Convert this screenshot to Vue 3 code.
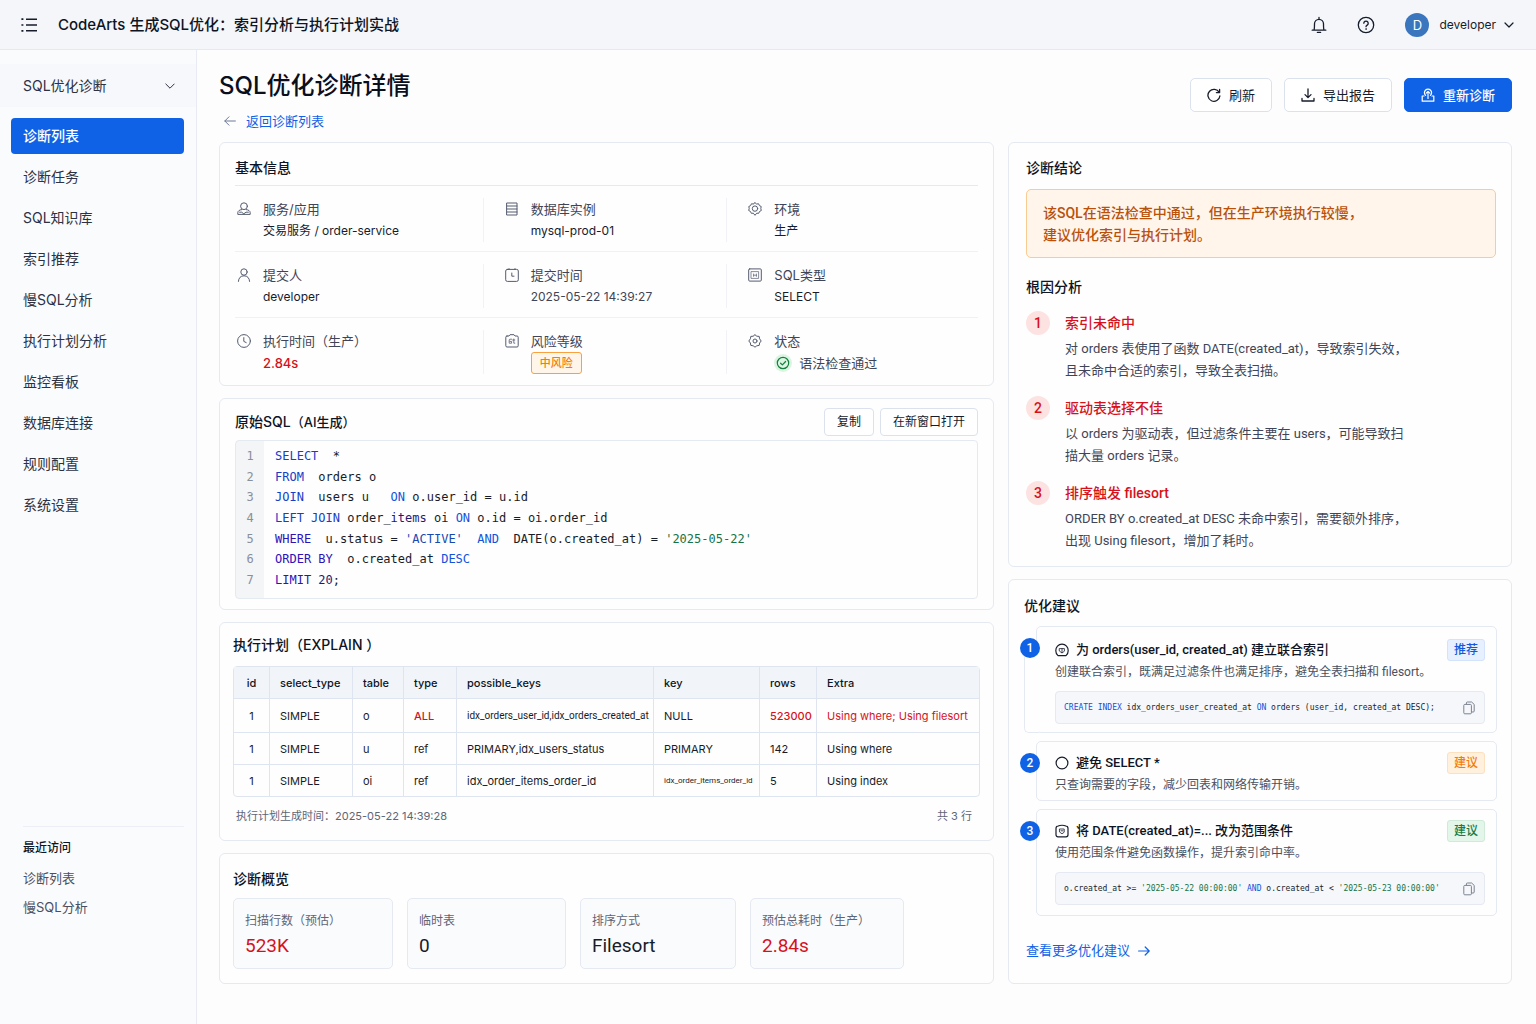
<script setup>
import { ref } from 'vue'

const navItems = ['诊断列表', '诊断任务', 'SQL知识库', '索引推荐', '慢SQL分析', '执行计划分析', '监控看板', '数据库连接', '规则配置', '系统设置']
const activeNav = ref('诊断列表')
const recents = ['诊断列表', '慢SQL分析']

const infoRows = [
  [
    { icon: 'service', label: '服务/应用', value: '交易服务 / order-service' },
    { icon: 'database', label: '数据库实例', value: 'mysql-prod-01' },
    { icon: 'gear', label: '环境', value: '生产' },
  ],
  [
    { icon: 'user', label: '提交人', value: 'developer' },
    { icon: 'calendar', label: '提交时间', value: '2025-05-22 14:39:27', tone: 'soft' },
    { icon: 'chip', label: 'SQL类型', value: 'SELECT' },
  ],
  [
    { icon: 'clock', label: '执行时间（生产）', value: '2.84s', tone: 'danger' },
    { icon: 'risk', label: '风险等级', value: '中风险', tone: 'tag' },
    { icon: 'cog', label: '状态', value: '语法检查通过', tone: 'pass' },
  ],
]

// Each line is a list of [text, colour class] tokens.
const sqlLines = [
  [['SELECT', 'kw'], ['  *', '']],
  [['FROM', 'kw'], ['  orders o', '']],
  [['JOIN', 'kw'], ['  users u   ', ''], ['ON', 'kw2'], [' o.user_id = u.id', '']],
  [['LEFT JOIN', 'kw'], [' order_', ''], ['items', 'navy'], [' oi ', ''], ['ON', 'kw2'], [' o.id = oi.order_id', '']],
  [['WHERE', 'kw3'], ['  u.status = ', ''], ["'ACTIVE'", 'lit'], ['  ', ''], ['AND', 'kw2'], ['  DATE(o.created_at) = ', ''], ["'2025-05-22'", 'str']],
  [['ORDER BY', 'kw3'], ['  o.created_at ', ''], ['DESC', 'kw2']],
  [['LIMIT', 'kw3'], [' ', ''], ['20', 'navy'], [';', '']],
]

const planColumns = ['id', 'select_type', 'table', 'type', 'possible_keys', 'key', 'rows', 'Extra']
const planRows = [
  ['1', 'SIMPLE', 'o', 'ALL', 'idx_orders_user_id,idx_orders_created_at', 'NULL', '523000', 'Using where; Using filesort'],
  ['1', 'SIMPLE', 'u', 'ref', 'PRIMARY,idx_users_status', 'PRIMARY', '142', 'Using where'],
  ['1', 'SIMPLE', 'oi', 'ref', 'idx_order_items_order_id', 'idx_order_items_order_id', '5', 'Using index'],
]
function cellClass(row, col) {
  return {
    danger: row === 0 && (col === 3 || col >= 6),
    strong: row === 0 && (col === 3 || col === 6),
    small: row === 0 && col === 4,
    tiny: row === 2 && col === 5,
  }
}

const stats = [
  { label: '扫描行数（预估）', value: '523K', danger: true },
  { label: '临时表', value: '0' },
  { label: '排序方式', value: 'Filesort' },
  { label: '预估总耗时（生产）', value: '2.84s', danger: true },
]

const causes = [
  { title: '索引未命中', lines: ['对 orders 表使用了函数 DATE(created_at)，导致索引失效，', '且未命中合适的索引，导致全表扫描。'] },
  { title: '驱动表选择不佳', lines: ['以 orders 为驱动表，但过滤条件主要在 users，可能导致扫', '描大量 orders 记录。'] },
  { title: '排序触发 filesort', lines: ['ORDER BY o.created_at DESC 未命中索引，需要额外排序，', '出现 Using filesort，增加了耗时。'] },
]

const advices = [
  {
    icon: 'shield', title: '为 orders(user_id, created_at) 建立联合索引', badge: '推荐', tone: 'blue',
    desc: '创建联合索引，既满足过滤条件也满足排序，避免全表扫描和 filesort。',
    code: [['CREATE INDEX', 'kw2'], [' idx_orders_user_created_at ', ''], ['ON', 'kw2'], [' orders (user_id, created_at DESC);', '']],
  },
  {
    icon: 'ring', title: '避免 SELECT *', badge: '建议', tone: 'orange',
    desc: '只查询需要的字段，减少回表和网络传输开销。',
  },
  {
    icon: 'case', title: '将 DATE(created_at)=... 改为范围条件', badge: '建议', tone: 'green',
    desc: '使用范围条件避免函数操作，提升索引命中率。',
    code: [['o.created_at >= ', ''], ["'2025-05-22 00:00:00'", 'str'], [' ', ''], ['AND', 'kw2'], [' o.created_at < ', ''], ["'2025-05-23 00:00:00'", 'str']],
  },
]
</script>

<template>
  <div class="app">
    <header class="topbar">
      <button class="icon-btn" aria-label="菜单">
        <svg width="18" height="18" viewBox="0 0 18 18" fill="none" stroke="currentColor" stroke-width="1.5">
          <path d="M6 3.2h11M6 9h11M6 14.8h11" />
          <path d="M1.4 3.2h2M1.4 9h2M1.4 14.8h2" stroke-width="1.7" />
        </svg>
      </button>
      <span class="brand">CodeArts 生成SQL优化：索引分析与执行计划实战</span>
      <button class="icon-btn bell" aria-label="通知">
        <svg width="18" height="18" viewBox="0 0 18 18" fill="none" stroke="currentColor" stroke-width="1.3" stroke-linecap="round" stroke-linejoin="round">
          <path d="M2.2 14.2h13.6M4 14c.5-1 .5-2.200.5-6.200a4.500 4.500 0 0 1 9 0c0 4 0 5.200.5 6.200M9 3V1.400M7.400 16.400h3.200" />
        </svg>
      </button>
      <button class="icon-btn help" aria-label="帮助">
        <svg width="18" height="18" viewBox="0 0 18 18" fill="none" stroke="currentColor" stroke-width="1.3" stroke-linecap="round">
          <circle cx="9" cy="9" r="7.7" />
          <path d="M6.8 7.200a2.200 2.200 0 1 1 3.400 1.900c-.8.5-1.200.8-1.200 1.600" />
          <circle cx="9" cy="13" r=".5" fill="currentColor" stroke-width=".5" />
        </svg>
      </button>
      <button class="account">
        <span class="avatar">D</span>
        <span>developer</span>
        <svg width="10" height="10" viewBox="0 0 10 10" fill="none" stroke="currentColor" stroke-width="1.2" stroke-linecap="round" stroke-linejoin="round"><path d="M1 3 5 7l4-4" /></svg>
      </button>
    </header>

    <div class="body">
      <aside class="sidebar">
        <button class="group">
          <span>SQL优化诊断</span>
          <svg width="10" height="10" viewBox="0 0 10 10" fill="none" stroke="currentColor" stroke-linecap="round" stroke-linejoin="round"><path d="M.8 3 5 7.2 9.2 3" /></svg>
        </button>
        <nav class="nav">
          <a v-for="item in navItems" :key="item" href="#" :class="{ active: item === activeNav }" @click.prevent="activeNav = item">{{ item }}</a>
        </nav>
        <div class="recent">
          <h2>最近访问</h2>
          <a v-for="item in recents" :key="item" href="#">{{ item }}</a>
        </div>
      </aside>

      <main class="main">
        <div class="page-head">
          <div>
            <h1>SQL优化诊断详情</h1>
            <a class="back" href="#">
              <svg width="12" height="12" viewBox="0 0 12 12" fill="none" stroke="currentColor" stroke-linecap="round" stroke-linejoin="round"><path d="M11.4 6H.8M5 1.8.8 6 5 10.2" /></svg>
              返回诊断列表
            </a>
          </div>
          <div class="actions">
            <button class="btn">
              <svg width="14" height="14" viewBox="0 0 14 14" fill="none" stroke="currentColor" stroke-width="1.3" stroke-linecap="round" stroke-linejoin="round"><path d="M12.2 4.400A6 6 0 1 0 12.900 8M12.600 1.400v3.200H9.400" /></svg>
              刷新
            </button>
            <button class="btn">
              <svg width="14" height="14" viewBox="0 0 14 14" fill="none" stroke="currentColor" stroke-width="1.3" stroke-linecap="round" stroke-linejoin="round"><path d="M7 1v8.400M4 6.600l3 3 3-3M1 10.400V13h12v-2.600" /></svg>
              导出报告
            </button>
            <button class="btn primary">
              <svg width="14" height="14" viewBox="0 0 14 14" fill="none" stroke="currentColor" stroke-width="1.2" stroke-linecap="round" stroke-linejoin="round"><path d="M3 8H1.200v5.200h11.600V8H11M4.600 7.400a3.600 3.600 0 1 1 4.800 0M7 10.400V3.600M5.200 5.200 7 3.400l1.800 1.800" /></svg>
              重新诊断
            </button>
          </div>
        </div>

        <div class="columns">
          <div class="col">
            <section class="card info">
              <h2>基本信息</h2>
              <div v-for="(row, r) in infoRows" :key="r" class="info-row">
                <div v-for="cell in row" :key="cell.label" class="info-cell">
                  <svg class="glyph" width="14" height="14" viewBox="0 0 14 14" fill="none" stroke="currentColor" stroke-linecap="round" stroke-linejoin="round">
                    <template v-if="cell.icon === 'service'">
                      <circle cx="7" cy="4.200" r="3.400" />
                      <path d="M4.800 7.600C2.400 7.800.8 9 .8 10.800v1.600h12.400v-1.600c0-1.800-1.600-3-4-3.200M2.600 10.200h2l2.200 1.600 2.200-1.600h2.400" />
                    </template>
                    <template v-else-if="cell.icon === 'database'">
                      <path d="M2 1h10v12H2zM2 4h10M2 7h10M2 10h10" />
                    </template>
                    <template v-else-if="cell.icon === 'gear'">
                      <path d="M7 .7 8.600 2l2-.2.8 1.800 1.800.9-.4 2 .5 2-1.800 1-.8 1.800-2-.1L7 13.300l-1.700-2.100-2 .1-.8-1.800-1.800-1 .5-2-.4-2 1.800-.9.8-1.800 2 .2z" />
                      <circle cx="7" cy="6.600" r="2.700" />
                    </template>
                    <template v-else-if="cell.icon === 'user'">
                      <circle cx="7" cy="4" r="3.200" />
                      <path d="M1.400 13.400c.2-3.400 2.200-5.600 5.600-5.600s5.400 2.200 5.600 5.600" />
                    </template>
                    <template v-else-if="cell.icon === 'calendar'">
                      <rect x=".7" y="1.400" width="12.600" height="12" rx="1.600" />
                      <path d="M4 .6v1M10 .6v1M6.800 5v3.200H9" />
                    </template>
                    <template v-else-if="cell.icon === 'chip'">
                      <rect x=".7" y=".9" width="12.600" height="12.200" rx="1" />
                      <path d="M3.400 3.600h7.200v6.800H3.400zM5.600 6v2.400M8.400 6v2.400M5.600 7.200h2.800" stroke-width=".7" />
                    </template>
                    <template v-else-if="cell.icon === 'clock'">
                      <circle cx="7" cy="7" r="6.400" />
                      <path d="M6.800 3.600v3.800l2.400 1.200" />
                    </template>
                    <template v-else-if="cell.icon === 'risk'">
                      <path d="M2 2h2l1-1.300h4L10 2h2a1.200 1.200 0 0 1 1.200 1.200v8.600A1.200 1.200 0 0 1 12 13H2a1.200 1.200 0 0 1-1.200-1.200V3.200A1.200 1.200 0 0 1 2 2z" />
                      <path d="M6.600 5.200H5a.8.8 0 0 0-.8.8v3.200h2.400V7.400H5M7.600 6h2.200M8.800 5v4.200h1" stroke-width=".8" />
                    </template>
                    <template v-else>
                      <path d="m7 .8 1.800 1.400 2.400.2.400 2.400L13.200 7l-1.600 2-.4 2.400-2.400.4L7 13.200l-1.800-1.400-2.400-.4L2.400 9 .8 7l1.600-2.200.4-2.400 2.400-.2z" />
                      <circle cx="7" cy="7" r="2" />
                    </template>
                  </svg>
                  <div class="info-text">
                    <span class="label">{{ cell.label }}</span>
                    <span v-if="cell.tone === 'tag'" class="risk-tag">{{ cell.value }}</span>
                    <span v-else-if="cell.tone === 'pass'" class="value pass">
                      <svg width="18" height="18" viewBox="0 0 18 18" fill="none" stroke="#15803d" stroke-width="1.200" stroke-linecap="round" stroke-linejoin="round">
                        <circle cx="9" cy="9" r="9" fill="#dcf5e3" stroke="none" />
                        <circle cx="9" cy="9" r="5.700" />
                        <path d="m6.600 9.200 1.800 1.700 3.200-3.400" />
                      </svg>
                      {{ cell.value }}
                    </span>
                    <span v-else class="value" :class="cell.tone">{{ cell.value }}</span>
                  </div>
                </div>
              </div>
            </section>

            <section class="card sql">
              <div class="sql-head">
                <h2>原始SQL<small>（AI生成）</small></h2>
                <button class="btn-sm">复制</button>
                <button class="btn-sm">在新窗口打开</button>
              </div>
              <ol class="code">
                <li v-for="(line, n) in sqlLines" :key="n">
                  <span class="num">{{ n + 1 }}</span>
                  <code><span v-for="(t, i) in line" :key="i" :class="t[1]">{{ t[0] }}</span></code>
                </li>
              </ol>
            </section>

            <section class="card plan">
              <h2>执行计划（EXPLAIN ）</h2>
              <table>
                <colgroup>
                  <col class="c-id"><col class="c-select"><col class="c-table"><col class="c-type"><col class="c-possible"><col class="c-key"><col class="c-rows"><col>
                </colgroup>
                <thead>
                  <tr><th v-for="c in planColumns" :key="c" scope="col">{{ c }}</th></tr>
                </thead>
                <tbody>
                  <tr v-for="(row, r) in planRows" :key="r">
                    <td v-for="(v, c) in row" :key="c" :class="cellClass(r, c)">{{ v }}</td>
                  </tr>
                </tbody>
              </table>
              <div class="plan-foot">
                <span>执行计划生成时间：2025-05-22 14:39:28</span>
                <span>共 3 行</span>
              </div>
            </section>

            <section class="card overview">
              <h2>诊断概览</h2>
              <div class="stats">
                <div v-for="s in stats" :key="s.label" class="stat">
                  <span class="stat-label">{{ s.label }}</span>
                  <strong :class="{ danger: s.danger }">{{ s.value }}</strong>
                </div>
              </div>
            </section>
          </div>

          <div class="col">
            <section class="card verdict">
              <h2>诊断结论</h2>
              <p class="alert">该SQL在语法检查中通过，但在生产环境执行较慢，<br>建议优化索引与执行计划。</p>
              <h2>根因分析</h2>
              <ol class="causes">
                <li v-for="(c, n) in causes" :key="n">
                  <span class="cause-num">{{ n + 1 }}</span>
                  <div>
                    <h3>{{ c.title }}</h3>
                    <p><template v-for="(l, i) in c.lines" :key="i"><br v-if="i">{{ l }}</template></p>
                  </div>
                </li>
              </ol>
            </section>

            <section class="card advice">
              <h2>优化建议</h2>
              <ol class="advice-list">
                <li v-for="(a, n) in advices" :key="n">
                  <span class="step">{{ n + 1 }}</span>
                  <div class="advice-title">
                    <svg width="14" height="14" viewBox="0 0 14 14" fill="none" stroke="currentColor" stroke-width="1.200" stroke-linecap="round" stroke-linejoin="round">
                      <template v-if="a.icon === 'shield'">
                        <path d="M3 12.600A6.200 6.200 0 0 1 .8 7.800 6.200 6.200 0 0 1 7 1.200a6.200 6.200 0 0 1 6.200 6.600A6.200 6.200 0 0 1 11 12.600z" />
                        <path d="M4.600 5.600h4.800v2.600L7 10 4.600 8.200zM7 5.600v4" stroke-width=".8" />
                      </template>
                      <circle v-else-if="a.icon === 'ring'" cx="7" cy="7" r="5.900" />
                      <template v-else>
                        <path d="M3 12.800a2 2 0 0 1-2-2V4.400A2.400 2.400 0 0 1 3.200 2C5 1 9 1 10.800 2A2.400 2.400 0 0 1 13 4.400v6.400a2 2 0 0 1-2 2z" />
                        <path d="M4.800 5h4.400v3.200L7 9.800 4.800 8.200zM6 6.800h2" stroke-width=".8" />
                      </template>
                    </svg>
                    <h3>{{ a.title }}</h3>
                    <span class="badge" :class="a.tone">{{ a.badge }}</span>
                  </div>
                  <p>{{ a.desc }}</p>
                  <div v-if="a.code" class="snippet">
                    <code><span v-for="(t, i) in a.code" :key="i" :class="t[1]">{{ t[0] }}</span></code>
                    <button class="copy" aria-label="复制代码">
                      <svg width="12" height="14" viewBox="0 0 12 14" fill="none" stroke="currentColor" stroke-linejoin="round">
                        <rect x=".8" y="3.400" width="7.600" height="9.400" rx="1" />
                        <path d="M3.400 3.200V2a1 1 0 0 1 1-1h4.200l2.600 2.400V10a1 1 0 0 1-1 1H8.600" />
                      </svg>
                    </button>
                  </div>
                </li>
              </ol>
              <a class="more" href="#">
                查看更多优化建议
                <svg width="12" height="12" viewBox="0 0 12 12" fill="none" stroke="currentColor" stroke-width="1.200" stroke-linecap="round" stroke-linejoin="round"><path d="M.6 6h10.600M7.200 2l4 4-4 4" /></svg>
              </a>
            </section>
          </div>
        </div>
      </main>
    </div>
  </div>
</template>

<style>
body {
  margin: 0;
  background: #fdfdfe;
}
</style>

<style scoped>
.app {
  --ink: #171c2b;
  --muted: #5f6577;
  --line: #e5e9f2;
  --blue: #0f62e6;
  --red: #d5121b;
  display: flex;
  flex-direction: column;
  min-height: 100vh;
  color: var(--ink);
  font-family: Inter, "Noto Sans CJK SC", sans-serif;
  font-size: 13px;
  line-height: 22px;
}
h1, h2, h3, p, ol {
  margin: 0;
  padding: 0;
}
ol {
  list-style: none;
}
h2 {
  color: #0d1424;
  font-size: 14px;
  font-weight: 500;
  line-height: 24px;
}
h3 {
  font-weight: 500;
}
a {
  color: var(--blue);
  text-decoration: none;
}
button {
  padding: 0;
  border: 0;
  background: none;
  color: inherit;
  font: inherit;
  cursor: pointer;
}
svg {
  display: block;
  flex: none;
}
.danger {
  color: var(--red);
}

/* Top bar */
.topbar {
  display: flex;
  align-items: center;
  box-sizing: border-box;
  height: 50px;
  padding: 0 22px 0 20px;
  border-bottom: 1px solid #e6e9f0;
  background: #f4f6fa;
}
.brand {
  margin-left: 20px;
  color: #0d1424;
  font-size: 15px;
  font-weight: 500;
}
.bell {
  margin-left: auto;
}
.help {
  margin-left: 29px;
}
.account {
  display: flex;
  align-items: center;
  margin-left: 30px;
  font-size: 12px;
}
.account svg {
  margin-left: 8px;
}
.avatar {
  width: 24px;
  margin-right: 10px;
  border-radius: 50%;
  background: #3a76bd;
  color: #fff;
  font-size: 13px;
  line-height: 24px;
}

/* Sidebar */
.body {
  display: flex;
  flex: 1;
}
.sidebar {
  display: flex;
  flex: none;
  flex-direction: column;
  box-sizing: border-box;
  width: 197px;
  padding: 14px 0 106px;
  border-right: 1px solid #e8ebf3;
  background: #fafbfd;
}
.group {
  display: flex;
  align-items: center;
  justify-content: space-between;
  height: 43px;
  padding: 0 21px 0 23px;
  background: #f7f8fb;
  color: #2c3242;
  font-size: 14px;
}
.nav {
  display: flex;
  flex-direction: column;
  gap: 5px;
  padding: 11px 12px 0 11px;
}
.nav a {
  padding: 0 12px;
  border-radius: 4px;
  color: #2c3242;
  font-size: 14px;
  line-height: 36px;
}
.nav .active {
  background: var(--blue);
  color: #fff;
  font-weight: 500;
}
.recent {
  display: flex;
  flex-direction: column;
  gap: 7px;
  margin: auto 12px 0 23px;
  padding-top: 9px;
  border-top: 1px solid #eceff5;
}
.recent h2 {
  font-size: 12px;
}
.recent a {
  color: #4a5061;
}

/* Page */
.main {
  flex: 1;
  min-width: 0;
  padding: 20px 24px 40px 22px;
}
.page-head {
  display: flex;
  justify-content: space-between;
  margin-bottom: 10px;
}
h1 {
  color: #0a0f1c;
  font-size: 24px;
  font-weight: 500;
  line-height: 32px;
}
.back {
  display: flex;
  align-items: center;
  gap: 10px;
  margin: 8px 0 0 5px;
}
.back svg {
  color: #6b7a99;
}
.actions {
  display: flex;
  gap: 12px;
  margin-top: 8px;
}
.btn {
  display: flex;
  align-items: center;
  gap: 8px;
  box-sizing: border-box;
  height: 34px;
  padding: 0 16px;
  border: 1px solid #dbe1ed;
  border-radius: 5px;
  background: #fff;
}
.btn.primary {
  border-color: var(--blue);
  background: var(--blue);
  color: #fff;
  font-weight: 500;
}
.columns {
  display: grid;
  grid-template-columns: 775fr 504fr;
  gap: 14px;
}
.col {
  display: flex;
  flex-direction: column;
  gap: 12px;
  min-width: 0;
}
.card {
  border: 1px solid var(--line);
  border-radius: 6px;
  background: #fefefe;
}

/* Basic information */
.info {
  padding: 13px 15px 2px;
}
.info h2 {
  padding-bottom: 5px;
  border-bottom: 1px solid var(--line);
}
.info-row {
  display: grid;
  grid-template-columns: 248fr 244fr 252fr;
  padding: 12px 0 9px;
}
.info-row + .info-row {
  border-top: 1px solid #eef1f7;
}
.info-cell {
  display: flex;
  gap: 12px;
  padding-left: 2px;
}
.info-cell + .info-cell {
  padding-left: 21px;
  border-left: 1px solid #f0f2f7;
}
.glyph {
  margin-top: 4px;
  color: #555c70;
}
.info-text {
  display: flex;
  flex-direction: column;
  align-items: flex-start;
}
.label {
  color: #3f4557;
}
.value {
  font-size: 12px;
}
.value.soft {
  color: #3f4557;
}
.value.danger {
  font-size: 13px;
  font-weight: 500;
}
.value.pass {
  display: flex;
  align-items: center;
  gap: 7px;
  color: #3f4557;
  font-size: 13px;
}
.risk-tag {
  padding: 0 8px;
  border: 1px solid #f9a03f;
  border-radius: 3px;
  background: #fff5e8;
  color: #f57c0a;
  font-size: 11px;
  font-weight: 500;
  line-height: 20px;
}

/* SQL source */
.sql {
  padding: 9px 15px 10px;
}
.sql-head {
  display: flex;
  gap: 6px;
  margin-bottom: 4px;
}
.sql-head h2 {
  margin-right: auto;
  line-height: 28px;
}
.sql-head small {
  font-size: 13px;
}
.btn-sm {
  padding: 0 12px;
  border: 1px solid #dbe1ed;
  border-radius: 4px;
  background: #fff;
  font-size: 12px;
  line-height: 26px;
}
code, .num {
  font-family: "DejaVu Sans Mono", "Liberation Mono", monospace;
  white-space: pre;
}
.code {
  display: flex;
  flex-direction: column;
  justify-content: space-between;
  min-height: 144px;
  padding: 5px 0 8px;
  border: 1px solid var(--line);
  border-radius: 4px;
  background: linear-gradient(90deg, #f4f5f6 28px, #fefefe 28px);
  font-size: 12px;
  line-height: 20px;
}
.code li {
  display: flex;
  gap: 11px;
}
.num {
  width: 28px;
  color: #8a8f9c;
  text-align: center;
}
.kw {
  color: #1440c8;
}
.kw2 {
  color: #1252dc;
}
.kw3 {
  color: #2f12b8;
}
.lit {
  color: #1749b0;
}
.navy {
  color: #1d1a78;
}
.str {
  color: #157347;
}

/* Execution plan */
.plan {
  padding: 10px 13px 13px;
}
table {
  width: 100%;
  margin-top: 9px;
  border: 1px solid #dfe5f0;
  border-radius: 4px;
  border-spacing: 0;
  table-layout: fixed;
  font-size: 11px;
}
.c-id { width: 35px; }
.c-select { width: 83px; }
.c-table { width: 51px; }
.c-type { width: 53px; }
.c-possible { width: 197px; }
.c-key { width: 106px; }
.c-rows { width: 57px; }
th, td {
  height: 31px;
  padding: 0 0 0 10px;
  border-left: 1px solid #dfe5f0;
  text-align: left;
  white-space: nowrap;
}
th {
  background: #f1f4f9;
  color: #0d1424;
  font-weight: 500;
}
td {
  border-top: 1px solid #dfe5f0;
}
tbody tr:first-child td {
  height: 33px;
}
th:first-child, td:first-child {
  padding: 0;
  border-left: 0;
  text-align: center;
}
.strong {
  font-weight: 500;
}
.small, .tiny {
  font-family: Roboto, sans-serif;
  font-size: 10px;
}
.tiny {
  font-size: 8px;
}
.plan-foot {
  display: flex;
  justify-content: space-between;
  margin-top: 8px;
  padding: 0 8px 0 3px;
  color: var(--muted);
  font-size: 11px;
}

/* Overview */
.overview {
  padding: 13px 13px 14px;
}
.stats {
  display: grid;
  grid-template-columns: 160fr 159fr 156fr 154fr;
  gap: 14px;
  margin: 7px 76px 0 0;
}
.stat {
  display: flex;
  flex-direction: column;
  padding: 11px 11px 8px;
  border: 1px solid var(--line);
  border-radius: 5px;
  background: #fafbfd;
}
.stat-label {
  color: var(--muted);
  font-size: 12px;
}
.stat strong {
  font-family: Roboto, "Noto Sans CJK SC", sans-serif;
  font-size: 19px;
  font-weight: 400;
  line-height: 28px;
}

/* Verdict */
.verdict, .advice {
  font-family: Roboto, "Noto Sans CJK SC", sans-serif;
}
.verdict {
  padding: 13px 15px 14px 17px;
}
.alert {
  margin: 9px 0 17px;
  padding: 12px 16px 11px;
  border: 1px solid #fbcb94;
  border-radius: 5px;
  background: #fff5eb;
  color: #b9510a;
  font-size: 14px;
  font-weight: 500;
}
.causes {
  display: flex;
  flex-direction: column;
  gap: 14px;
  margin-top: 12px;
}
.causes li {
  display: flex;
  gap: 15px;
}
.cause-num {
  width: 24px;
  height: 24px;
  border-radius: 50%;
  background: #fde2e2;
  color: var(--red);
  font-size: 14px;
  font-weight: 500;
  line-height: 24px;
  text-align: center;
}
.causes h3 {
  margin-bottom: 3px;
  color: var(--red);
  font-size: 14px;
  line-height: 24px;
}
.causes p {
  color: #3f4557;
}

/* Advice */
.advice {
  flex: 1;
  padding: 14px 14px 20px 15px;
}
.advice-list {
  display: flex;
  flex-direction: column;
  gap: 8px;
  margin: 8px 0 24px 12px;
}
.advice-list li {
  position: relative;
  padding: 10px 11px 4px 18px;
  border: 1px solid var(--line);
  border-radius: 5px;
}
.advice-list li:first-child {
  padding-top: 12px;
  padding-bottom: 2px;
}
.advice-list li:first-child::before {
  position: absolute;
  top: 22px;
  bottom: -1px;
  left: -13px;
  width: 14px;
  border: solid var(--line);
  border-width: 0 0 1px 1px;
  border-radius: 0 0 0 5px;
  background: #fefefe;
  content: "";
}
.step {
  position: absolute;
  top: 11px;
  left: -17px;
  width: 20px;
  border-radius: 50%;
  background: var(--blue);
  color: #fff;
  font-size: 12px;
  font-weight: 500;
  line-height: 20px;
  text-align: center;
}
.advice-title {
  display: flex;
  align-items: center;
  gap: 7px;
}
.advice-title h3 {
  flex: 1;
  color: #0d1424;
  font-size: 13px;
}
.badge {
  padding: 0 6px;
  border: 1px solid;
  border-radius: 3px;
  font-size: 12px;
  font-weight: 500;
  line-height: 20px;
}
.badge.blue {
  border-color: #d3e3fb;
  background: #e6f0fe;
  color: #1258dc;
}
.badge.orange {
  border-color: #fde0bd;
  background: #fff1de;
  color: #f57c0a;
}
.badge.green {
  border-color: #cfead8;
  background: #e4f5e9;
  color: #1a7a43;
}
.advice-list p {
  color: #4a5061;
  font-size: 12px;
}
.snippet {
  display: flex;
  align-items: center;
  justify-content: space-between;
  height: 31px;
  margin: 8px 0 6px;
  padding: 0 9px 0 8px;
  border: 1px solid var(--line);
  border-radius: 4px;
  background: #f5f7fa;
  font-size: 8px;
}
.copy {
  color: #7c8291;
}
.more {
  display: inline-flex;
  align-items: center;
  gap: 8px;
  margin-left: 2px;
}
</style>
